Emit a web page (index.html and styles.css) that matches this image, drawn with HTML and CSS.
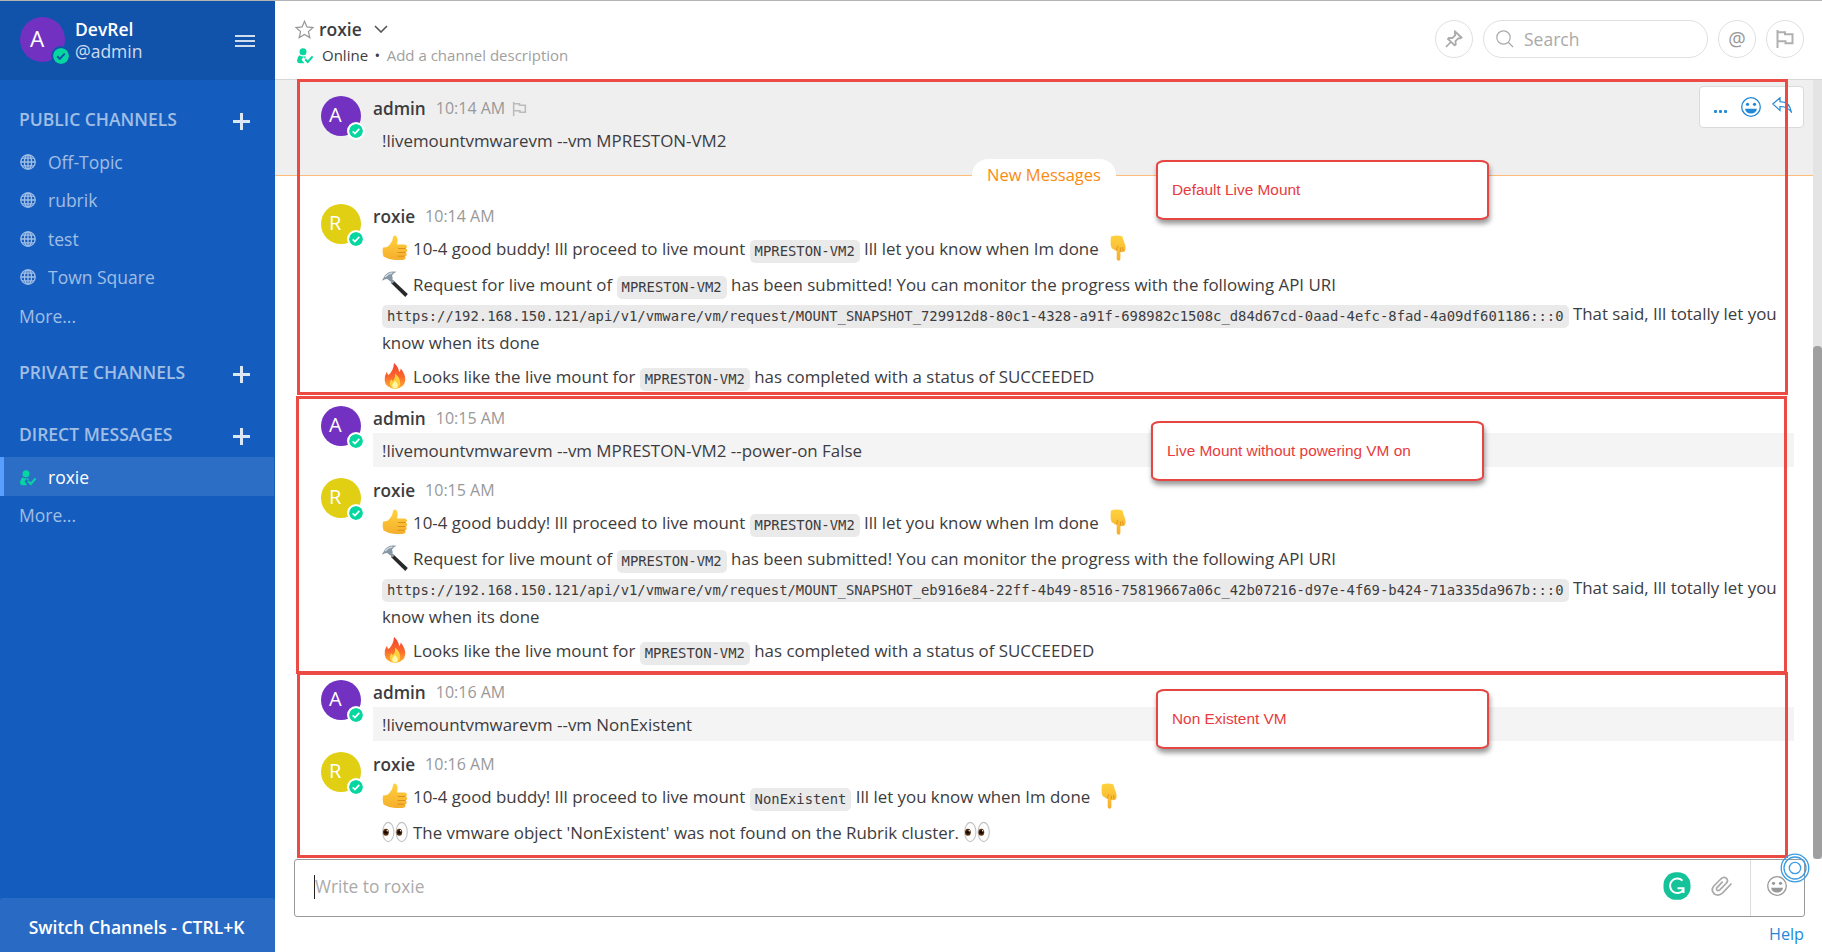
FILE: index.html
```
<!DOCTYPE html>
<html lang="en">
<head>
<meta charset="utf-8">
<title>roxie - DevRel</title>
<link rel="stylesheet" href="styles.css">
</head>
<body>
<svg width="0" height="0" class="defs">
  <defs>
    <linearGradient id="skin" x1="0" y1="0" x2="0" y2="1"><stop offset="0" stop-color="#ffd23e"/><stop offset="1" stop-color="#f5ae2c"/></linearGradient>
    <linearGradient id="flame" x1="0" y1="0" x2="0" y2="1"><stop offset="0" stop-color="#f4402c"/><stop offset="0.55" stop-color="#fb6a2d"/><stop offset="1" stop-color="#fdb52e"/></linearGradient>
    <symbol id="check" viewBox="0 0 16 16"><circle cx="8" cy="8" r="8" fill="#06d6a0"/><path d="M4.200 8.300l2.600 2.600 5-5.300" fill="none" stroke="#fff" stroke-width="2"/></symbol>
    <symbol id="check-dark" viewBox="0 0 16 16"><circle cx="8" cy="8" r="8" fill="#06d6a0"/><path d="M4.200 8.300l2.600 2.600 5-5.300" fill="none" stroke="#1153ab" stroke-width="2"/></symbol>
    <symbol id="thumb" viewBox="0 0 26 26"><path d="M1 12.500q4 .4 6.500-2.500 3.500-4 3.700-8.500Q12 .2 13.500.7q3.300 1.300 1.500 8.800h7.500q2.500.3 2.500 2 0 1.600-1.400 2 1.900.7 1.700 2.200-.3 1.600-1.800 1.900 1.500.8 1.200 2.200-.4 1.500-1.800 1.500 1 .9.600 2-.600 1.700-3.500 1.700H13Q7 24.800 1.500 21.500 0 17 1 12.500z" fill="url(#skin)"/><path d="M16 13.500h7.500M15.500 17.500h8M15.500 21.200h7" stroke="#dc8f1d" stroke-width="1" fill="none"/></symbol>
    <symbol id="down" viewBox="0 0 26 26"><path d="M7 1.500Q13 -.5 18.500 1.500 19 5 20.500 8q1.800 4 .7 7.500-.5 1.500-2 1.300-1 .8-2.200.2l-.6-.4V24q-.2 1.700-1.800 1.700T12.700 24v-8.500Q10 16 9.700 14 7.500 14.200 7.300 12 6 8 7 1.500z" fill="url(#skin)"/><path d="M12.700 15.500q-.2-3 1.500-4.500M16.400 16.500v-4M19.200 16.300l-.6-4.300" stroke="#dc8f1d" stroke-width=".9" fill="none"/></symbol>
    <symbol id="hammer" viewBox="0 0 26 26"><path d="M11.500 9.500L25.800 23 23.300 26 9 12z" fill="#26282a"/><path d="M7.500 7.500l4 4" stroke="#8d979f" stroke-width="3"/><path d="M.2 9.800Q0 8.500 1.500 7 2.500 3.500 6 1.700 9.500 0 14.500.8 11.500 2 10 4.500L10.800 7.500 7.500 9.800 5.300 8Q2.500 7.800.2 9.800z" fill="#8797a3"/><path d="M3 6Q6 2.500 10.500 1.800" stroke="#d5dde2" stroke-width="1.300" fill="none"/></symbol>
    <symbol id="fire" viewBox="0 0 26 26"><path d="M12 0q4.800 4 5 9 1.500-1 1.800-3.500 4.800 6 4.500 11.500-.8 8-10.300 9Q3.500 25 2.700 17.500 2.500 12 5 8.500q.2 2.500 1.500 3.500Q11.500 7.500 12 0z" fill="url(#flame)"/><path d="M13 10.500q5 4 5.200 9 0 5.500-5.200 6.200-5.200-.7-5.200-5.700.2-2.500 1.500-3.700.7 1.500 1.700 1.700Q13.500 15 13 10.500z" fill="#fed03d"/><path d="M13 18q3 2.500 2.800 5-.5 2.500-2.800 2.600-2.700-.2-2.800-2.600 0-2.500 2.800-5z" fill="#fff6a8"/></symbol>
    <symbol id="eyes" viewBox="0 0 26 26"><g fill="#fdfdfd" stroke="#c2c2c2" stroke-width="1.100"><ellipse cx="6.300" cy="13" rx="5.600" ry="9.600"/><ellipse cx="19.700" cy="13" rx="5.600" ry="9.600"/></g><ellipse cx="3.900" cy="13.200" rx="2.900" ry="3.500" fill="#5a2f0a"/><ellipse cx="17.300" cy="13.200" rx="2.900" ry="3.500" fill="#5a2f0a"/><circle cx="3.900" cy="13.200" r="1.800" fill="#120800"/><circle cx="17.300" cy="13.200" r="1.800" fill="#120800"/><circle cx="5.200" cy="11.700" r=".7" fill="#fff"/><circle cx="18.600" cy="11.700" r=".7" fill="#fff"/></symbol>
    <symbol id="globe" viewBox="0 0 16 16"><g fill="none" stroke="currentColor" stroke-width="1.300"><circle cx="8" cy="8" r="7.200"/><ellipse cx="8" cy="8" rx="3.600" ry="7.200"/><path d="M8 .8v14.400M.8 8h14.400M2 4.200h12M2 11.800h12"/></g></symbol>
    <symbol id="online" viewBox="0 0 16 16"><circle cx="6" cy="3.800" r="3.500" fill="#06d6a0"/><path d="M2.500 7.200Q0 9 0 12.500 0 15 2.500 15.200h4.800L4.500 11.500 6.500 9 8.500 11V8.200q-3.500 1-6-1z" fill="#06d6a0"/><path d="M8.200 11.300l2.600 2.700 4.800-5.600" fill="none" stroke="#06d6a0" stroke-width="2"/></symbol>
    <symbol id="flag" viewBox="0 0 18 18"><path d="M1.500 0v18M1.500 2.200h7.500v2h7.500v9H9.500v-2h-8" fill="none" stroke="currentColor" stroke-width="2"/></symbol>
    <symbol id="smile" viewBox="0 0 20 20"><circle cx="10" cy="10" r="9.300" fill="none" stroke="currentColor" stroke-width="1.300"/><circle cx="6.500" cy="7.300" r="1.600" fill="currentColor"/><circle cx="13.500" cy="7.300" r="1.600" fill="currentColor"/><path d="M4 11.800h12q-.8 4.700-6 4.700t-6-4.700z" fill="currentColor"/></symbol>
  </defs>
</svg>

<div class="app">
  <aside class="sidebar">
    <header class="team">
      <div class="avatar avatar-lg purple">A<svg class="status"><use href="#check-dark"/></svg></div>
      <div class="team-text"><div class="team-name">DevRel</div><div class="team-user">@admin</div></div>
      <div class="burger"><i></i><i></i><i></i></div>
    </header>
    <nav class="channels">
      <h2 class="section">PUBLIC CHANNELS<span class="plus"></span></h2>
      <a class="chan"><svg><use href="#globe"/></svg>Off-Topic</a>
      <a class="chan"><svg><use href="#globe"/></svg>rubrik</a>
      <a class="chan"><svg><use href="#globe"/></svg>test</a>
      <a class="chan"><svg><use href="#globe"/></svg>Town Square</a>
      <a class="chan">More...</a>
      <h2 class="section private">PRIVATE CHANNELS<span class="plus"></span></h2>
      <h2 class="section direct">DIRECT MESSAGES<span class="plus"></span></h2>
      <a class="chan active"><svg><use href="#online"/></svg>roxie</a>
      <a class="chan">More...</a>
    </nav>
    <footer class="switcher">Switch Channels - CTRL+K</footer>
  </aside>

  <main class="main">
    <header class="channel-head">
      <div class="channel-info">
        <div class="channel-title">
          <svg class="star" viewBox="0 0 18 18"><path d="M9 1.200l2.300 5.400 5.800.5-4.400 3.900 1.300 5.700L9 13.700 4 16.700 5.300 11 .9 7.100l5.800-.5z"/></svg>
          <span>roxie</span>
          <svg class="chev" viewBox="0 0 14 8"><path d="M1 1l6 6 6-6"/></svg>
        </div>
        <div class="channel-desc"><svg><use href="#online"/></svg><span class="on">Online</span><span class="dot">•</span><span class="add">Add a channel description</span></div>
      </div>
      <div class="tools">
        <div class="round"><svg class="pin" viewBox="0 0 18 18"><path d="M10 1.500l6.500 6-1 .8-2-.2-3 3 .2 3.400-1.100.9L3 9l1-1 3.300.2 3-3-.4-2.500zM5.800 12L1 17" /></svg></div>
        <div class="search"><svg viewBox="0 0 18 18"><circle cx="7.500" cy="7.500" r="6.700"/><path d="M12.500 12.500l4.500 4.500"/></svg>Search</div>
        <div class="round at">@</div>
        <div class="round"><svg class="hflag"><use href="#flag"/></svg></div>
      </div>
    </header>

    <div class="stage">
      <section class="posts">
        <article class="post first">
          <div class="avatar purple">A<svg class="status"><use href="#check"/></svg></div>
          <div class="body"><div class="meta"><b>admin</b><time>10:14 AM</time><svg class="pflag"><use href="#flag"/></svg></div>
            <div class="mine">!livemountvmwarevm --vm MPRESTON-VM2</div></div>
          <div class="actions"><span class="dots"><i></i><i></i><i></i></span><svg class="face"><use href="#smile"/></svg><svg class="reply" viewBox="0 0 20 16"><path d="M.8 7L8 .8v3.800q9.500 0 11.300 10.200Q15 9.500 8 9.500v4z"/></svg></div>
          <div class="new">New Messages</div>
        </article>

        <article class="post bot">
          <div class="avatar yellow">R<svg class="status"><use href="#check"/></svg></div>
          <div class="body"><div class="meta"><b>roxie</b><time>10:14 AM</time></div>
            <div class="text">
              <p><svg class="emo"><use href="#thumb"/></svg> 10-4 good buddy! Ill proceed to live mount <code>MPRESTON-VM2</code> Ill let you know when Im done <svg class="emo"><use href="#down"/></svg></p>
              <p><svg class="emo"><use href="#hammer"/></svg> Request for live mount of <code>MPRESTON-VM2</code> has been submitted! You can monitor the progress with the following API URI<br><code>https://192.168.150.121/api/v1/vmware/vm/request/MOUNT_SNAPSHOT_729912d8-80c1-4328-a91f-698982c1508c_d84d67cd-0aad-4efc-8fad-4a09df601186:::0</code> That said, Ill totally let you<br>know when its done</p>
              <p><svg class="emo"><use href="#fire"/></svg> Looks like the live mount for <code>MPRESTON-VM2</code> has completed with a status of SUCCEEDED</p>
            </div></div>
        </article>

        <article class="post cmd">
          <div class="avatar purple">A<svg class="status"><use href="#check"/></svg></div>
          <div class="body"><div class="meta"><b>admin</b><time>10:15 AM</time></div>
            <div class="mine shaded">!livemountvmwarevm --vm MPRESTON-VM2 --power-on False</div></div>
        </article>

        <article class="post bot">
          <div class="avatar yellow">R<svg class="status"><use href="#check"/></svg></div>
          <div class="body"><div class="meta"><b>roxie</b><time>10:15 AM</time></div>
            <div class="text">
              <p><svg class="emo"><use href="#thumb"/></svg> 10-4 good buddy! Ill proceed to live mount <code>MPRESTON-VM2</code> Ill let you know when Im done <svg class="emo"><use href="#down"/></svg></p>
              <p><svg class="emo"><use href="#hammer"/></svg> Request for live mount of <code>MPRESTON-VM2</code> has been submitted! You can monitor the progress with the following API URI<br><code>https://192.168.150.121/api/v1/vmware/vm/request/MOUNT_SNAPSHOT_eb916e84-22ff-4b49-8516-75819667a06c_42b07216-d97e-4f69-b424-71a335da967b:::0</code> That said, Ill totally let you<br>know when its done</p>
              <p><svg class="emo"><use href="#fire"/></svg> Looks like the live mount for <code>MPRESTON-VM2</code> has completed with a status of SUCCEEDED</p>
            </div></div>
        </article>

        <article class="post cmd">
          <div class="avatar purple">A<svg class="status"><use href="#check"/></svg></div>
          <div class="body"><div class="meta"><b>admin</b><time>10:16 AM</time></div>
            <div class="mine shaded">!livemountvmwarevm --vm NonExistent</div></div>
        </article>

        <article class="post last">
          <div class="avatar yellow">R<svg class="status"><use href="#check"/></svg></div>
          <div class="body"><div class="meta"><b>roxie</b><time>10:16 AM</time></div>
            <div class="text">
              <p><svg class="emo"><use href="#thumb"/></svg> 10-4 good buddy! Ill proceed to live mount <code>NonExistent</code> Ill let you know when Im done <svg class="emo"><use href="#down"/></svg></p>
              <p><svg class="emo"><use href="#eyes"/></svg> The vmware object 'NonExistent' was not found on the Rubrik cluster. <svg class="emo"><use href="#eyes"/></svg></p>
            </div></div>
        </article>
      </section>
      <div class="scroll"><div class="thumb"></div></div>
    </div>

    <div class="composer">
      <div class="field"><span class="caret"></span>Write to roxie</div>
      <svg class="gram" viewBox="0 0 28 28"><rect x=".5" y=".3" width="27" height="27.500" rx="12.500" fill="#15c39a"/><path d="M19.500 8.600A7.300 7.300 0 1 0 20.300 18M14.500 16.200h6V21" fill="none" stroke="#fff" stroke-width="2"/></svg>
      <svg class="clip" viewBox="0 0 22 20"><path d="M20.500 7.500l-8.800 9.300q-4.200 3.700-8.300 1.200-4-3.600-.6-8l7-7q3.200-2.800 5.700-.6 2.200 2.400-.4 5.100l-6.300 6.400q-1.600 1.300-2.900.2-1-1.300.3-2.800l5.500-5.600"/></svg>
      <div class="emoji-btn"><svg class="face"><use href="#smile"/></svg></div>
    </div>
    <div class="help">Help</div>
  </main>

  <!-- annotations -->
  <div class="frame f1"></div>
  <div class="frame f2"></div>
  <div class="frame f3"></div>
  <div class="note n1">Default Live Mount</div>
  <div class="note n2">Live Mount without powering VM on</div>
  <div class="note n3">Non Existent VM</div>
  <svg class="rings" viewBox="0 0 30 30"><circle cx="15" cy="15" r="13.800"/><circle cx="15" cy="15" r="11"/><circle cx="15" cy="15" r="5.700"/></svg>
</div>
</body>
</html>
```

FILE: styles.css
```
* { box-sizing: border-box; }
body { margin: 0; font-family: "Open Sans", sans-serif; font-size: 16.875px; color: #3d3c40; background: #fff; overflow: hidden; }
svg { flex: none; }
.defs { position: absolute; }
.app { position: relative; display: flex; width: 1822px; height: 952px; border-top: 1px solid #b4b4b4; }

.avatar { position: relative; flex: none; width: 40px; height: 40px; border-radius: 50%; color: #fff; font: 500 20px/38px "Open Sans", sans-serif; padding-left: 8px; }
.avatar-lg { width: 45px; height: 45px; font-size: 22.5px; line-height: 44px; padding-left: 10px; }
.purple { background: #7331c1; }
.yellow { background: #e0cf12; }
.status { position: absolute; right: -4px; bottom: -4px; width: 18px; height: 18px; border: 2px solid #fff; border-radius: 50%; background: #fff; }
.avatar-lg .status { right: -6px; bottom: -4px; width: 20px; height: 20px; border-color: #1153ab; background: #1153ab; }

.sidebar { display: flex; flex-direction: column; width: 275px; background: #145dbf; color: #a1bee5; font-size: 17.5px; }
.team { display: flex; height: 79px; padding: 16px 20px 0; background: #1153ab; }
.team-text { padding: 1px 0 0 10px; line-height: 22px; flex: 1; }
.team-name { font-weight: 600; color: #fff; }
.team-user { color: #d0ddee; }
.burger { display: flex; flex-direction: column; gap: 3px; width: 20px; padding-top: 18px; }
.burger i { height: 2px; background: #cfddee; }
.channels { flex: 1; padding-top: 22px; }
.section { display: flex; justify-content: space-between; align-items: center; margin: 0; height: 34px; padding: 0 25px 0 19px; font-size: 17.5px; font-weight: 600; line-height: 34px; }
.private { margin-top: 20px; }
.direct { margin-top: 28px; }
.plus { width: 17px; height: 17px; margin-top: 4px; background: linear-gradient(#dce7f5, #dce7f5) center/17px 3px no-repeat, linear-gradient(#dce7f5, #dce7f5) center/3px 17px no-repeat; }
.chan { display: flex; align-items: center; height: 38.500px; padding-left: 19px; }
.chan svg { width: 16px; height: 16px; margin: 0 12px 0 1px; }
.section + .chan { margin-top: 6.500px; }
.section + .chan.active { width: 274px; margin-top: 6px; height: 39px; padding-left: 15px; border-left: 4px solid #579eff; background: #2c6dc5; color: #fff; }
.chan.active svg { margin-top: 2px; }
.switcher { height: 54px; padding-right: 2px; line-height: 58px; border-radius: 3px 3px 0 0; background: #296bc4; color: #fff; text-align: center; font-weight: 600; }

.main { display: flex; flex-direction: column; flex: 1; min-width: 0; }
.channel-head { display: flex; justify-content: space-between; height: 79px; border-bottom: 1px solid #d8d8d8; padding: 16px 18px 0 20px; }
.channel-title { display: flex; align-items: center; height: 25px; font-size: 17.5px; font-weight: 600; line-height: 24px; }
.channel-title span { margin-top: -1px; }
.star { width: 19px; height: 19px; margin-right: 5px; fill: none; stroke: #999; stroke-width: 1.200; }
.chev { width: 14px; height: 8px; margin: -2px 0 0 12px; fill: none; stroke: #555; stroke-width: 1.600; }
.channel-desc { display: flex; align-items: center; height: 26px; font-size: 15px; }
.channel-desc svg { width: 16px; height: 16px; margin: 2px 9px 0 2px; }
.dot { margin: 0 6.500px; }
.add { color: #a0a0a0; }
.tools { display: flex; gap: 10px; padding-top: 3px; }
.round, .search { display: flex; align-items: center; justify-content: center; width: 38px; height: 38px; border: 1px solid #e0e0e0; border-radius: 19px; color: #b0b0b0; }
.search { width: 225px; justify-content: flex-start; padding-left: 12px; font-size: 17.500px; color: #aaa; }
.search svg { width: 18px; height: 18px; margin-right: 10px; fill: none; stroke: #aaa; stroke-width: 1.200; }
.pin { width: 18px; height: 18px; fill: none; stroke: #aaa; stroke-width: 1.800; }
.at { font-size: 19.500px; line-height: 34px; color: #999; }
.hflag { width: 18px; height: 18px; }

.stage { display: flex; height: 779px; }
.posts { flex: 1; min-width: 0; }
.post { position: relative; display: flex; padding-left: 46px; }
.body { flex: 1; padding: 0 19px 0 12px; }
.first { height: 96px; padding-top: 16px; background: #efefef; border-bottom: 1px solid #ffbc78; }
.bot { height: 202px; }
.first + .bot { height: 230px; padding-top: 28px; }
.cmd { height: 72px; }
.meta { display: flex; align-items: center; height: 27px; padding-bottom: 2px; line-height: 25px; }
.meta b { font-weight: 600; font-size: 17.200px; }
.meta time { margin-left: 10px; font-size: 16px; color: #999; }
.pflag { width: 15px; height: 14px; margin-left: 7px; color: #bbb; }
.mine { height: 34px; padding-left: 9px; line-height: 35px; font-size: 16.920px; }
.shaded { background: #f4f4f4; }
.text { padding: 3px 0 0 9px; line-height: 29px; white-space: nowrap; font-size: 16.890px; }
.text p { margin: 0 0 7px; }
.text p + p { margin-bottom: 5px; }
.emo { width: 26px; height: 26px; margin-right: .7px; vertical-align: -6px; }
.emo:last-child { margin-left: .6px; }
code { position: relative; top: .6px; padding: 3px 5px 4px; border-radius: 5px; background: #eaeaea; font: 13.860px/1 "DejaVu Sans Mono", monospace; }

.actions { position: absolute; right: 9px; top: 6px; display: flex; width: 105px; height: 42px; border: 1px solid #dadada; border-radius: 4px; background: #fff; color: #2389d7; }
.dots { display: flex; gap: 2px; margin: 23px 0 0 14px; width: 27px; }
.dots i { width: 3px; height: 3px; border-radius: 1px; background: #2389d7; }
.face { width: 20px; height: 20px; }
.actions .face { margin-top: 10px; }
.reply { width: 20px; height: 16px; margin: 10px 0 0 11px; fill: none; stroke: #2389d7; stroke-width: 1.200; }
.new { position: absolute; left: 697px; top: 79px; width: 144px; height: 33px; border-radius: 16px; background: #fff; color: #f88c11; text-align: center; line-height: 32px; font-size: 16.500px; }
.scroll { width: 9px; padding-top: 266px; background: #e4e4e4; }
.thumb { height: 513px; border-radius: 4px; background: #9f9fa0; }

.composer { display: flex; width: 1511px; height: 58px; margin-left: 19px; border: 1px solid #999; border-radius: 3px; flex: none; }
.field { flex: 1; padding-left: 19px; line-height: 54px; font-size: 17.300px; color: #aaa; }
.caret { display: inline-block; width: 1px; height: 24px; background: #222; vertical-align: -6px; }
.gram { width: 28px; height: 28px; margin-top: 12px; }
.clip { width: 22px; height: 20px; margin: 16px 17px 0 20px; fill: none; stroke: #aaa; stroke-width: 1.700; }
.emoji-btn { width: 54px; padding: 16px 0 0 16px; border-left: 1px solid #ddd; color: #999; }
.help { padding: 5px 18px 0 0; text-align: right; line-height: 24px; color: #2389d7; font-size: 16.200px; }

/* markup drawn over the window */
.frame { position: absolute; border: 3px solid #ec4b44; }
.f1 { left: 297px; top: 78px; width: 1491px; height: 316px; }
.f2 { left: 296px; top: 395px; width: 1491px; height: 278px; }
.f3 { left: 297px; top: 671px; width: 1491px; height: 186px; }
.note { position: absolute; width: 333px; height: 60px; padding-left: 14px; border: 2px solid #e64541; border-radius: 9px / 5px; background: #fff; box-shadow: 1px 4px 5px rgba(0,0,0,.4); color: #e83c3c; font: 15.400px/55px "Liberation Sans", Arial, sans-serif; }
.n1 { left: 1156px; top: 159px; }
.n2 { left: 1151px; top: 420px; }
.n3 { left: 1156px; top: 688px; }
.rings { position: absolute; left: 1780px; top: 852px; width: 30px; height: 30px; fill: none; stroke: #3d9be0; stroke-width: 1.300; }
```
